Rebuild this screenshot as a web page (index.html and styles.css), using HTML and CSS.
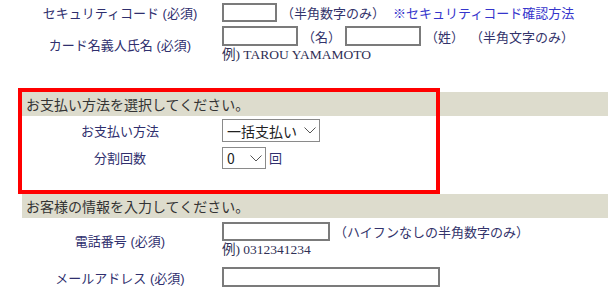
FILE: index.html
```html
<!DOCTYPE html>
<html lang="ja">
<head>
    <meta charset="UTF-8">
    <meta name="viewport" content="width=device-width, initial-scale=1.0">
    <title>お支払い情報入力</title>
    <link rel="stylesheet" href="styles.css">
</head>
<body>
    <div class="form">
        <div class="row row-sec">
            <div class="label">セキュリティコード (必須)</div>
            <div class="field">
                <div class="line">
                    <input type="text" class="in-sec">
                    <span class="note">（半角数字のみ）</span>
                    <a href="#" class="link">※セキュリティコード確認方法</a>
                </div>
            </div>
        </div>
        <div class="row row-name">
            <div class="label">カード名義人氏名 (必須)</div>
            <div class="field">
                <div class="line">
                    <input type="text" class="in-name">
                    <span class="note">（名）</span>
                    <input type="text" class="in-name">
                    <span class="note">（姓）</span>
                    <span class="note">（半角文字のみ）</span>
                </div>
                <div class="example">例) TAROU YAMAMOTO</div>
            </div>
        </div>
        <div class="spacer"></div>

        <div class="section-head">お支払い方法を選択してください。</div>
        <div class="row row-pay">
            <div class="label">お支払い方法</div>
            <div class="field">
                <div class="line">
                    <span class="select-wrap sel-pay">
                        <select><option>一括支払い</option><option>分割払い</option></select>
                        <svg class="chev" width="12" height="7" viewBox="0 0 12 7"><path d="M0.5 0.5 L6 6 L11.5 0.5" fill="none" stroke="#555" stroke-width="1"/></svg>
                    </span>
                </div>
            </div>
        </div>
        <div class="row row-count">
            <div class="label">分割回数</div>
            <div class="field">
                <div class="line">
                    <span class="select-wrap sel-count">
                        <select><option>0</option><option>3</option><option>6</option></select>
                        <svg class="chev" width="12" height="7" viewBox="0 0 12 7"><path d="M0.5 0.5 L6 6 L11.5 0.5" fill="none" stroke="#555" stroke-width="1"/></svg>
                    </span>
                    <span class="unit">回</span>
                </div>
            </div>
        </div>
        <div class="spacer spacer-small"></div>

        <div class="section-head">お客様の情報を入力してください。</div>
        <div class="row row-tel">
            <div class="label">電話番号 (必須)</div>
            <div class="field">
                <div class="line">
                    <input type="text" class="in-tel">
                    <span class="note">（ハイフンなしの半角数字のみ）</span>
                </div>
                <div class="example">例) 0312341234</div>
            </div>
        </div>
        <div class="row row-mail">
            <div class="label">メールアドレス (必須)</div>
            <div class="field">
                <div class="line">
                    <input type="text" class="in-mail">
                </div>
            </div>
        </div>
    </div>

    <div class="highlight"></div>
</body>
</html>
```

FILE: styles.css
```css
body {
    margin: 0;
    width: 608px;
    height: 301px;
    overflow: hidden;
    position: relative;
    background: #fff;
    font-family: "Liberation Sans", "Noto Sans CJK JP", sans-serif;
    font-size: 13px;
    color: #33336b;
}
.form {
    margin-left: 22px;
    width: 586px;
}
.row {
    display: grid;
    grid-template-columns: 196px 1fr;
    align-items: center;
}
.label {
    text-align: center;
    color: #2f2f6e;
}
.field {
    padding-left: 4px;
    min-width: 0;
}
.line {
    display: flex;
    align-items: center;
    white-space: nowrap;
}
input {
    box-sizing: border-box;
    height: 20px;
    border: 2px solid #7b7b7b;
    background: #fff;
    margin: 0;
    padding: 0 2px;
}
.in-sec { width: 55px; height: 19px; }
.in-name { width: 76px; }
.in-tel { width: 108px; height: 19px; }
.in-mail { width: 218px; }
.note {
    color: #33336b;
    margin-left: 4px;
    margin-right: 4px;
}
.note + .note {
    margin-left: 2px;
}
.link {
    color: #3535cc;
    text-decoration: none;
    margin-left: 4px;
}
.example {
    font-family: "Liberation Serif", "Noto Sans CJK JP", serif;
    font-size: 13.5px;
    line-height: 15px;
    color: #2f2f55;
    margin-top: 1px;
}
.row-sec { height: 25px; }
.row-name { height: 38px; }
.spacer { height: 29px; }
.spacer-small { height: 24px; }
.section-head {
    height: 24px;
    line-height: 24px;
    background: #dddccd;
    color: #333;
    font-family: "Noto Sans CJK JP", sans-serif;
    font-size: 14px;
    padding-left: 4px;
}
.row-pay { height: 29px; }
.row-count { height: 25px; }
.row-tel { height: 45px; }
.row-tel .field { align-self: start; padding-top: 4px; }
.row-mail { height: 28px; }
.select-wrap {
    position: relative;
    display: inline-block;
}
.select-wrap select {
    appearance: none;
    -webkit-appearance: none;
    box-sizing: border-box;
    border: 1px solid #8a8a8a;
    border-radius: 0;
    background: #fff;
    color: #222;
    font-family: "Noto Sans CJK JP", sans-serif;
    font-size: 14px;
    padding: 0 0 0 4px;
    margin: 0;
    display: block;
}
.sel-pay select { width: 98px; height: 23px; }
.sel-count select { width: 44px; height: 22px; }
.chev {
    position: absolute;
    right: 4px;
    top: 8px;
    pointer-events: none;
}
.unit {
    margin-left: 3px;
    color: #2f2f6e;
}
.highlight {
    position: absolute;
    left: 18px;
    top: 88px;
    width: 422px;
    height: 106px;
    box-sizing: border-box;
    border: 4px solid #ff0000;
    pointer-events: none;
}
```
